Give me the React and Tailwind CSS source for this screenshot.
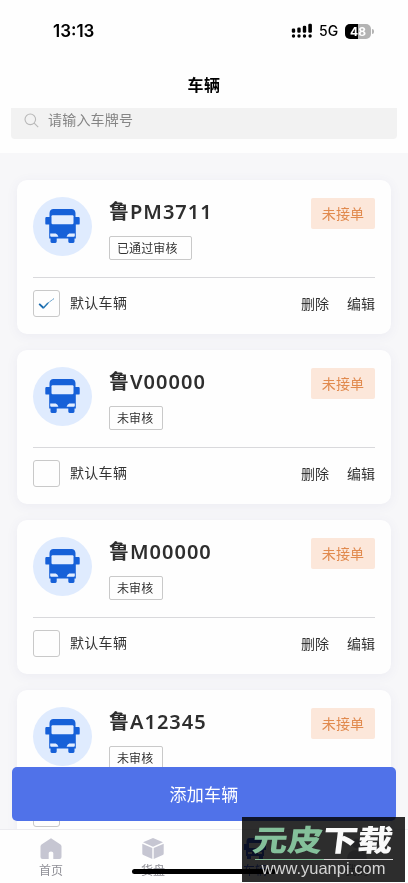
import React, { useState } from 'react';

const vehicles = [
  { plate: '鲁PM3711', audit: '已通过审核', auditClass: 'w-[83px]' },
  { plate: '鲁V00000', audit: '未审核', auditClass: 'w-[54px]' },
  { plate: '鲁M00000', audit: '未审核', auditClass: 'w-[54px]' },
  { plate: '鲁A12345', audit: '未审核', auditClass: 'w-[54px]' },
];

function StatusBar() {
  return (
    <div className="h-[62px] shrink-0 flex items-center pl-[53px] pr-[34px] font-['Inter','Liberation_Sans',sans-serif] text-black">
      <span className="text-[17px] leading-5 font-semibold">13:13</span>
      <div className="ml-auto flex items-center">
        <svg width="22" height="16" viewBox="0 0 22 16" fill="#000">
          <rect x="0.800" y="5.500" width="3.400" height="4.300" rx="1.300" />
          <rect x="6.300" y="4.500" width="3.400" height="5.300" rx="1.300" />
          <rect x="11.800" y="2.700" width="3.400" height="7.100" rx="1.300" />
          <rect x="17.300" y="0.800" width="3.600" height="9" rx="1.300" />
          <circle cx="2.500" cy="13" r="1.700" />
          <circle cx="8" cy="13" r="1.700" />
          <circle cx="13.500" cy="13" r="1.700" />
          <circle cx="19.100" cy="13" r="1.700" />
        </svg>
        <span className="w-[32px] pl-[6px] text-[14px] leading-5 font-medium">5G</span>
        <div className="relative w-[26px] h-[15px] rounded-[5px] overflow-hidden bg-[#b4b4b4]">
          <div className="w-[13px] h-full bg-black" />
          <span className="absolute inset-0 text-center text-[12px] leading-[15px] font-bold text-white">48</span>
        </div>
        <div className="w-[2px] h-[5px] ml-px rounded-r-full bg-[#b4b4b4]" />
      </div>
    </div>
  );
}

function BusIcon() {
  return (
    <svg className="mb-[2px]" width="35" height="34" viewBox="0 0 35 34">
      <path
        fill="#1660d8"
        d="M8.500 0h18q3.600 .2 4 4v4h3q1.200 0 1.200 1.200v5.200q0 1.200-1.200 1.200h-2.700v13.800h-1.300v3.200q0 1.300-1.300 1.300h-3.600q-1.300 0-1.300-1.300v-3.200h-11.600v3.200q0 1.300-1.300 1.300h-3.600q-1.300 0-1.300-1.300v-3.200h-1.300v-13.800h-2.700q-1.200 0-1.200-1.200v-5.200q0-1.200 1.200-1.200h3v-4q.4-3.800 4-4z"
      />
      <path fill="#e3edff" d="M7.500 6.300h20q1 0 1 1v6.800q0 1.200-1.200 1.200h-19.600q-1.200 0-1.200-1.200v-6.800q0-1 1-1z" />
      <path fill="#e3edff" d="M5.200 24.600h5.500q2.200 .8 2.700 3.200h-7.200q-1 0-1-1zM29.800 24.600h-5.500q-2.200 .8-2.700 3.200h7.200q1 0 1-1z" />
    </svg>
  );
}

function CheckMark() {
  return (
    <svg width="17" height="13" viewBox="0 0 17 13" fill="none">
      <path d="M1.200 6.800l4.300 4.200" stroke="#1769ae" strokeWidth="1.800" />
      <path d="M5.200 11.200L10 6" stroke="#2778b5" strokeWidth="1.500" />
      <path d="M10 6L16 1.600" stroke="#4e91c3" strokeWidth="1" strokeDasharray="2 .7" />
    </svg>
  );
}

function VehicleCard({ vehicle, checked, onToggle }) {
  return (
    <div className="h-[154px] shrink-0 rounded-[10px] bg-[#fefefe] px-4 pt-[17px] shadow-[0_2px_12px_rgba(80,80,160,0.07)]">
      <div className="h-20 flex items-start border-b border-[#d9d9dc] box-content">
        <div className="w-[59px] h-[59px] shrink-0 rounded-full bg-[#dfebfe] flex items-center justify-center">
          <BusIcon />
        </div>
        <div className="ml-[17px] flex flex-col items-start">
          <h2 className="h-[30px] whitespace-nowrap text-[20px] leading-[29px] font-semibold tracking-[1px] text-[#2e2e2e] font-['Noto_Sans','Noto_Sans_CJK_SC',sans-serif]">
            {vehicle.plate}
          </h2>
          <span className={`${vehicle.auditClass} h-6 mt-[9px] pl-[7px] border border-[#c9c9c9] rounded-[2px] text-[12px] leading-[22px] tracking-[0.1px] text-[#333] whitespace-nowrap`}>
            {vehicle.audit}
          </span>
        </div>
        <span className="ml-auto mt-[1px] w-16 h-[31px] rounded-[2px] bg-[#fce7da] text-center text-[14px] leading-[31px] tracking-[0.2px] text-[#e18a4e]">
          未接单
        </span>
      </div>
      <div className="h-[51px] flex items-center text-[14px] leading-5 text-[#333]">
        <button
          type="button"
          onClick={onToggle}
          className="w-[27px] h-[27px] rounded-[3px] border border-[#c9c9c9] flex items-center justify-center"
        >
          {checked && <CheckMark />}
        </button>
        <span className="ml-[10px] mb-[3px] tracking-[0.3px]">默认车辆</span>
        <button type="button" className="ml-auto mb-px">删除</button>
        <button type="button" className="ml-[18px] mb-px">编辑</button>
      </div>
    </div>
  );
}

function HomeIcon() {
  return (
    <svg width="22" height="21" viewBox="0 0 22 21">
      <path fill="#c6c6d2" d="M11 .3l9.500 6.200q1 .8 1 2v10.500q0 2-2 2h-6.200v-6q0-1.600-2.300-1.600t-2.300 1.600v6h-6.200q-2 0-2-2v-10.500q0-1.200 1-2z" />
    </svg>
  );
}

function BoxIcon() {
  return (
    <svg width="22" height="21" viewBox="0 0 22 21" fill="#c6c6d2">
      <path d="M11 0l10 4.300-10 4.400-10-4.400z" />
      <path d="M.3 5.700l10 4.300v11l-9-4q-1-.5-1-1.600zM21.700 5.700l-10 4.300v11l9-4q1-.5 1-1.600z" />
    </svg>
  );
}

function TabBusIcon() {
  return (
    <svg width="22" height="21" viewBox="0 0 22 21">
      <path fill="#3457dd" d="M5 0h12q2 0 2.500 3v3h2.500v6h-2v6h-1v3h-4v-3h-8v3h-4v-3h-1v-6h-2v-6h2.500v-3q.5-3 2.500-3z" />
      <path fill="#fff" d="M5 5h12v5h-12zM4 14h4v2h-4zM14 14h4v2h-4z" />
    </svg>
  );
}

function PersonIcon() {
  return (
    <svg width="22" height="21" viewBox="0 0 22 21" fill="#c6c6d2">
      <circle cx="11" cy="5.500" r="5" />
      <path d="M1 21q0-9 10-9t10 9z" />
    </svg>
  );
}

const tabs = [
  { label: '首页', icon: <HomeIcon />, color: 'text-[#8f8f96]' },
  { label: '货盘', icon: <BoxIcon />, color: 'text-[#8f8f96]' },
  { label: '车辆', icon: <TabBusIcon />, color: 'text-[#3457dd]' },
  { label: '我的', icon: <PersonIcon />, color: 'text-[#8f8f96]' },
];

function Watermark() {
  return (
    <div className="absolute left-[242px] top-[817px] w-[163px] h-[65px] flex flex-col items-center">
      {/* multiply keeps the tab bar behind only faintly visible */}
      <div className="absolute inset-0 bg-[#2d2d2d] mix-blend-multiply" />
      <div className="relative h-[42px] w-[138px] flex justify-center whitespace-nowrap">
        <span className="text-[35px] leading-[42px] font-black -skew-x-6 scale-y-[0.84] text-[#fafafa]">
          <span className="text-[#84c09a]">元皮</span>下载
        </span>
      </div>
      <div className="relative w-[138px] h-px shrink-0 flex">
        <div className="w-1/2 bg-[#84c09a]" />
        <div className="w-1/2 bg-[#d8d8d8]" />
      </div>
      <span className="relative text-[16.5px] leading-[17px] text-[#d4d4d4] font-['Liberation_Sans',sans-serif]">www.yuanpi.com</span>
    </div>
  );
}

export default function App() {
  const [defaultIndex, setDefaultIndex] = useState(0);

  return (
    <div className="relative w-[408px] h-[883px] overflow-hidden bg-[#f7f7f9] font-['Noto_Sans_CJK_SC',sans-serif] flex flex-col">
      <header className="h-[153px] shrink-0 bg-[#fefefe] flex flex-col">
        <StatusBar />
        <h1 className="h-[46px] text-center text-[16px] leading-[45px] font-bold text-black tracking-[0.5px]">车辆</h1>
        <div className="mx-[11px] h-[31px] rounded-b-[4px] bg-[#f2f2f2] flex items-start pl-[13px]">
          <svg className="mt-[5px]" width="15" height="15" viewBox="0 0 15 15" fill="none" stroke="#b8b8b8" strokeWidth="1.100">
            <circle cx="6.300" cy="6.300" r="5.300" />
            <path d="M10.200 10.200l4 4" />
          </svg>
          <span className="ml-[9px] text-[14px] leading-[23px] tracking-[0.2px] text-[#858585]">请输入车牌号</span>
        </div>
      </header>

      <main className="flex-1 min-h-0 overflow-hidden flex flex-col gap-4 pt-[27px] pl-[17px] pr-[17px]">
        {vehicles.map((vehicle, index) => (
          <VehicleCard
            key={vehicle.plate}
            vehicle={vehicle}
            checked={defaultIndex === index}
            onToggle={() => setDefaultIndex(index)}
          />
        ))}
      </main>

      <nav className="h-[54px] shrink-0 bg-[#fefefe] border-t border-[#ececf0] grid grid-cols-4">
        {tabs.map((tab) => (
          <button key={tab.label} type="button" className={`flex flex-col items-center justify-start pt-[8px] text-[12px] leading-[20px] ${tab.color}`}>
            {tab.icon}
            <span className="mt-px">{tab.label}</span>
          </button>
        ))}
      </nav>

      <button
        type="button"
        className="absolute left-3 top-[767px] w-[384px] h-[54px] rounded-[5px] bg-[#5072e9] text-white text-[17px] tracking-[0.3px]"
      >
        添加车辆
      </button>
      <div className="absolute left-[132px] top-[869px] w-[144px] h-[5px] rounded-full bg-black" />
      <Watermark />
    </div>
  );
}
